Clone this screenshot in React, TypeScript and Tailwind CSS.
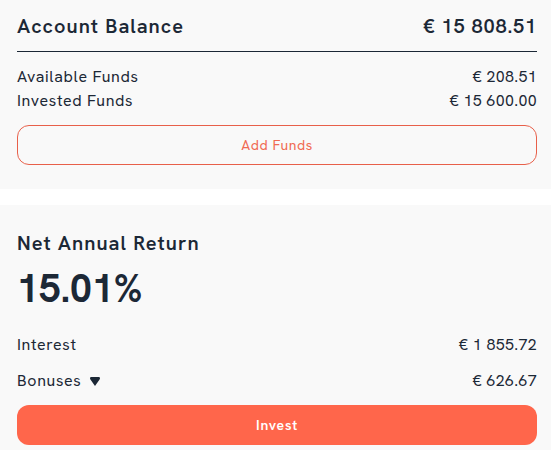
import { ReactNode } from 'react';

const font = { fontFamily: '"Hanken Grotesk", Inter, "Noto Sans", sans-serif' };

function Row({ label, value, className = '' }: { label: ReactNode; value: string; className?: string }) {
  return (
    <div className={`flex items-center justify-between ${className}`}>
      <span className="tracking-[0.04em]">{label}</span>
      <span className="tracking-[0.02em]">{value}</span>
    </div>
  );
}

export default function App() {
  return (
    <div className="w-[551px] h-[450px] overflow-hidden bg-white text-[#1c2836]" style={font}>
      {/* Balance */}
      <div className="bg-[#f9f9f9] pl-[17px] pr-[14px] pt-[12px] h-[189px]">
        <div className="flex items-center justify-between h-[27px] text-[20px] font-semibold">
          <span className="tracking-[0.05em]">Account Balance</span>
          <span className="tracking-[0.04em]">€ 15 808.51</span>
        </div>
        <div className="mt-[12px] h-px bg-[#1c2836]" />
        <div className="mt-[13px] text-[16px] leading-[24px]">
          <Row label="Available Funds" value="€ 208.51" />
          <Row label="Invested Funds" value="€ 15 600.00" />
        </div>
        <button className="mt-[12px] w-full h-[40px] rounded-[12px] border border-[#e8604a] text-[#f06a52] text-[14px] tracking-[0.04em]">
          Add Funds
        </button>
      </div>

      {/* Return */}
      <div className="mt-[16px] bg-[#f9f9f9] pl-[17px] pr-[14px] pt-[26px] h-[260px]">
        <div className="text-[20px] font-semibold leading-[24px] tracking-[0.05em]">Net Annual Return</div>
        <div className="mt-[10px] text-[39px] font-bold leading-[48px]">15.01%</div>
        <div className="mt-[20px] text-[16px]">
          <Row label="Interest" value="€ 1 855.72" className="h-[24px]" />
          <Row
            className="mt-[12px] h-[24px]"
            label={
              <span className="flex items-center gap-[7px]">
                Bonuses
                <svg width="12" height="11" viewBox="0 0 12 11">
                  <path
                    d="M1 2.2 Q1 1 2.2 1 H9.8 Q11 1 11 2.2 Q11 3 10.4 3.8 L6 10 L1.6 3.8 Q1 3 1 2.2 Z"
                    fill="#1c2836"
                  />
                </svg>
              </span>
            }
            value="€ 626.67"
          />
        </div>
        <button className="mt-[12px] w-full h-[40px] rounded-[12px] bg-[#ff664b] text-white text-[14px] font-semibold tracking-[0.05em]">
          Invest
        </button>
      </div>
    </div>
  );
}
